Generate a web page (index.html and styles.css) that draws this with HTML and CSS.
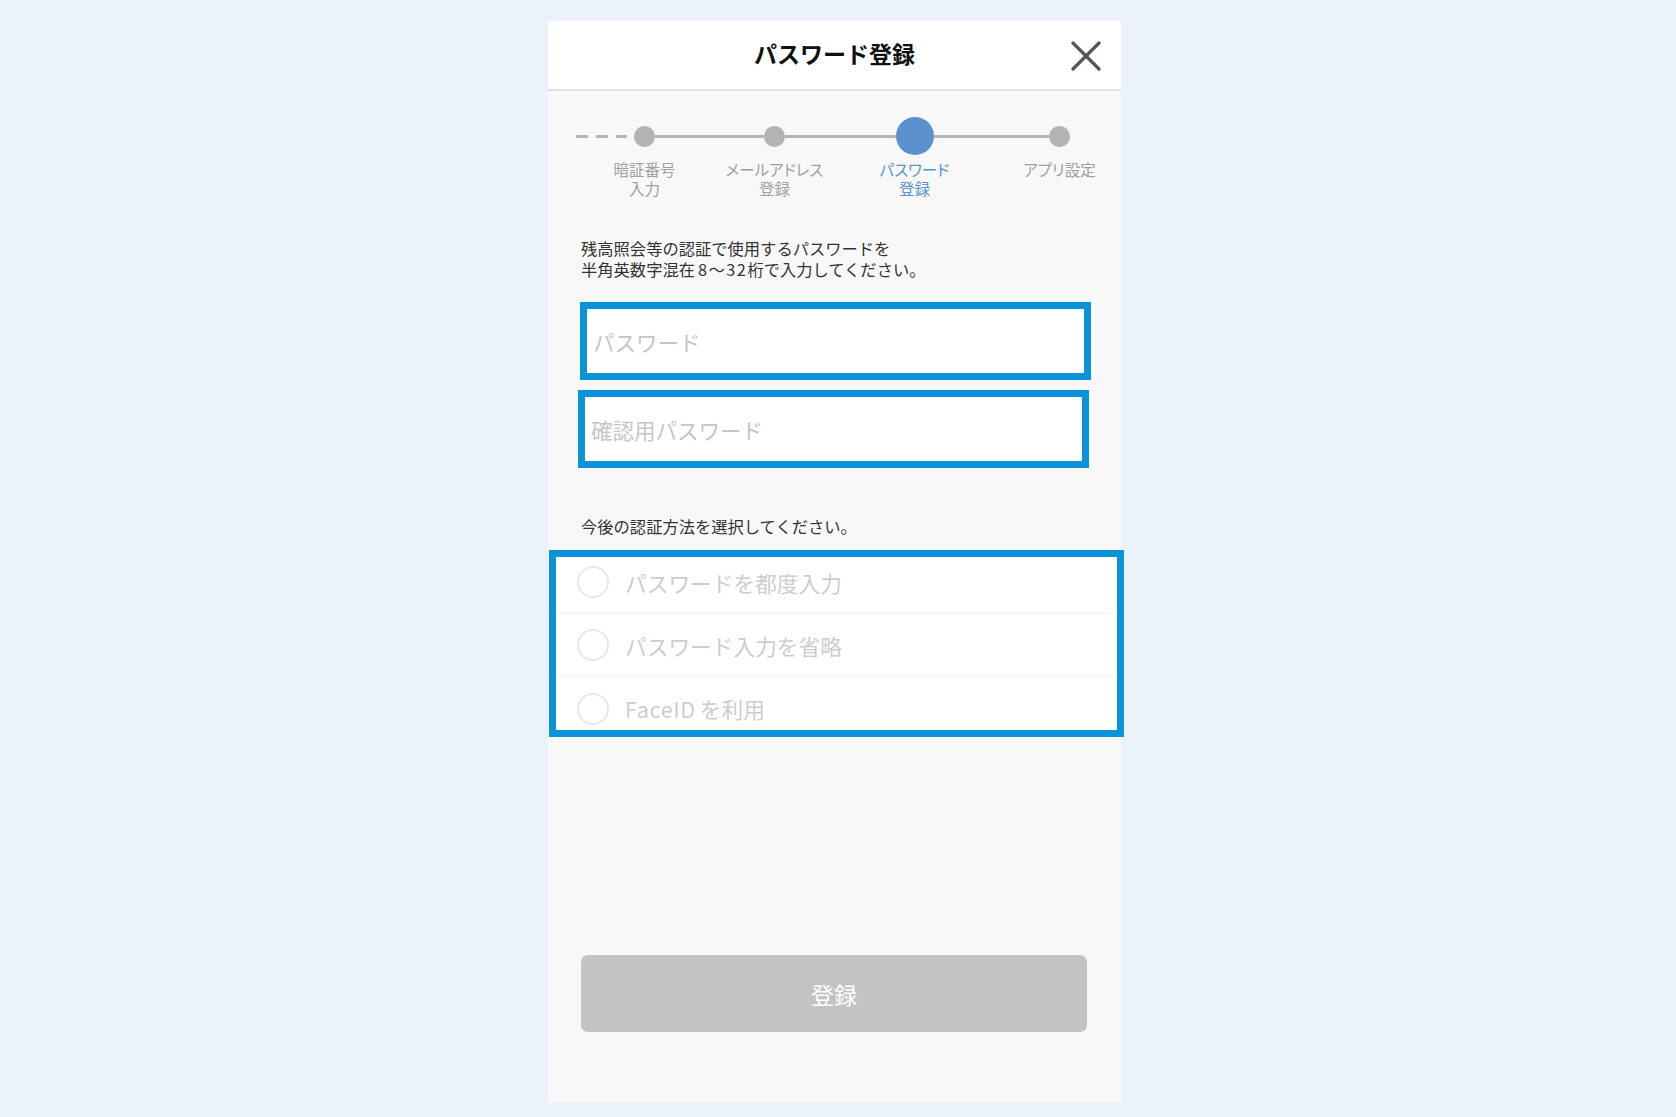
FILE: index.html
```html
<!DOCTYPE html>
<html lang="ja">
  <head>
    <meta charset="UTF-8" />
    <meta name="viewport" content="width=device-width, initial-scale=1.0" />
    <title>パスワード登録</title>
    <link rel="stylesheet" href="styles.css">
  </head>
  <body>
    <div class="panel">
      <div class="header">
        <h1 class="title">パスワード登録</h1>
        <button class="close" aria-label="閉じる">
          <svg width="30" height="30" viewBox="0 0 30 30">
            <path d="M2 2 L28 28 M28 2 L2 28" stroke="#555" stroke-width="3.2" stroke-linecap="round" fill="none" />
          </svg>
        </button>
      </div>

      <!-- Stepper -->
      <div class="stepper">
        <div class="step">
          <div class="step-track">
            <span class="line dashed"></span>
            <span class="dot"></span>
            <span class="line"></span>
          </div>
          <div class="step-label">暗証番号<br>入力</div>
        </div>
        <div class="step">
          <div class="step-track">
            <span class="line"></span>
            <span class="dot"></span>
            <span class="line"></span>
          </div>
          <div class="step-label">メールアドレス<br>登録</div>
        </div>
        <div class="step current">
          <div class="step-track">
            <span class="line"></span>
            <span class="dot"></span>
            <span class="line"></span>
          </div>
          <div class="step-label">パスワード<br>登録</div>
        </div>
        <div class="step">
          <div class="step-track">
            <span class="line"></span>
            <span class="dot"></span>
            <span class="line none"></span>
          </div>
          <div class="step-label">アプリ設定</div>
        </div>
      </div>

      <p class="note note-top">残高照会等の認証で使用するパスワードを<br>半角英数字混在<span class="num">8～32</span>桁で入力してください。</p>

      <div class="fields">
        <input class="field" type="password" placeholder="パスワード">
        <input class="field field-confirm" type="password" placeholder="確認用パスワード">
      </div>

      <p class="note note-method">今後の認証方法を選択してください。</p>

      <div class="options">
        <label class="option"><span class="radio"></span><span>パスワードを都度入力</span></label>
        <label class="option"><span class="radio"></span><span>パスワード入力を省略</span></label>
        <label class="option"><span class="radio"></span><span><span class="latin">FaceID</span>を利用</span></label>
        <div class="highlight"></div>
      </div>

      <button class="submit" disabled>登録</button>
    </div>
  </body>
</html>
```

FILE: styles.css
```css
body {
  margin: 0;
  background-color: #ebf2fa;
  font-family: "Noto Sans CJK JP", "Noto Sans", sans-serif;
  color: #333;
}
.panel {
  width: 573px;
  height: 1082px;
  margin: 21px 0 0 548px;
  background-color: #f8f8f8;
  display: flex;
  flex-direction: column;
}
/* Header */
.header {
  height: 68px;
  background-color: #fff;
  border-bottom: 2px solid #e0e0e0;
  display: flex;
  align-items: center;
  justify-content: center;
  position: relative;
}
.title {
  margin: 0;
  font-size: 23px;
  font-weight: bold;
  color: #111;
  line-height: 1;
  margin-top: -4px;
}
.close {
  position: absolute;
  right: 20px;
  top: 20px;
  width: 30px;
  height: 30px;
  padding: 0;
  border: none;
  background: none;
  cursor: pointer;
}
/* Stepper */
.stepper {
  display: grid;
  grid-template-columns: 130px 130px 150px 140px;
  padding: 26px 0 0 31.5px;
}
.step-track {
  height: 38px;
  display: flex;
  align-items: center;
}
.step-track .line {
  flex: 1;
  height: 3px;
  background-color: #b5b5b5;
}
.step-track .line.none {
  background: none;
}
.step-track .line.dashed {
  flex: none;
  width: 51px;
  margin: 0 7px 0 -3.5px;
  background: repeating-linear-gradient(to right, #b5b5b5 0, #b5b5b5 12px, transparent 12px, transparent 20px);
}
.dot {
  width: 21px;
  height: 21px;
  border-radius: 50%;
  background-color: #b3b3b3;
  flex: none;
}
.step.current .dot {
  width: 38px;
  height: 38px;
  background-color: #5b91cd;
}
.step-label {
  margin-top: 5px;
  font-size: 15.5px;
  line-height: 19px;
  color: #a0a0a0;
  text-align: center;
  font-feature-settings: "palt";
}
.step.current .step-label {
  color: #5b91cd;
}
/* Texts */
.note {
  margin: 0;
  padding-left: 33px;
  font-size: 16.3px;
  line-height: 21px;
  color: #333;
}
.note .num {
  letter-spacing: 1.5px;
  margin-left: 3px;
}
.note-top {
  margin-top: 40px;
}
.note-method {
  margin-top: 48px;
}
/* Input fields */
.fields {
  display: flex;
  flex-direction: column;
  gap: 10px;
  margin-top: 22px;
}
.field {
  box-sizing: border-box;
  width: 511px;
  height: 78px;
  margin-left: 32px;
  padding: 0 6px;
  border: 7px solid #0a93d6;
  background-color: #fff;
  font-family: inherit;
  font-size: 21.5px;
  outline: none;
}
.field::placeholder {
  color: #c6c6c6;
}
.field-confirm {
  margin-left: 30px;
}
/* Options */
.options {
  position: relative;
  margin-top: 14px;
  background-color: #fff;
}
.option {
  height: 63px;
  box-sizing: border-box;
  display: flex;
  align-items: center;
  gap: 16px;
  padding-left: 29px;
  font-size: 21.7px;
  color: #cdcdcd;
  border-bottom: 1px solid #f3f3f3;
}
.option:last-of-type {
  border-bottom: none;
}
.option .latin {
  letter-spacing: 0.6px;
  margin-right: 4px;
}
.radio {
  box-sizing: border-box;
  width: 32px;
  height: 32px;
  border: 2px solid #e8e8e8;
  border-radius: 50%;
}
.highlight {
  position: absolute;
  top: -1px;
  bottom: 3px;
  left: 1px;
  right: -3px;
  border: 7px solid #0a93d6;
  pointer-events: none;
}
/* Submit */
.submit {
  width: 506px;
  height: 77px;
  margin: 215px 0 0 33px;
  border: none;
  border-radius: 7px;
  background-color: #c3c3c3;
  color: #fff;
  font-family: inherit;
  font-size: 23px;
}
```
